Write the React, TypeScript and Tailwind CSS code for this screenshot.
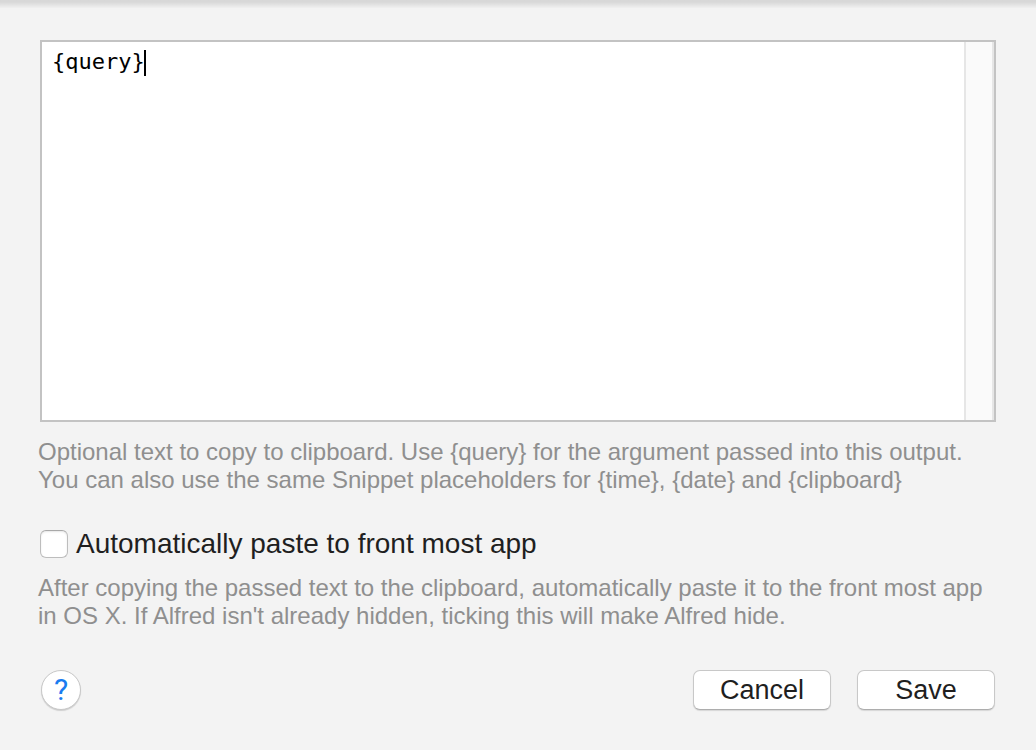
const hintClass = '-mx-0.5 text-[24px] leading-[28px] text-[#8f8f8f]'

const buttonClass =
  'h-10 w-[138px] rounded-[7px] border border-[#c8c8c8] border-b-[#adadad] bg-white text-[27px] leading-[36px] text-[#1f1f1f] shadow-[0_1px_1px_rgba(0,0,0,0.12)]'

export default function App() {
  return (
    <form
      className="flex min-h-dvh flex-col bg-[#f3f3f3] font-['Liberation_Sans',Arial,sans-serif]"
      onSubmit={(e) => e.preventDefault()}
    >
      {/* Shadow cast by the title bar of the parent window */}
      <div className="h-2 bg-gradient-to-b from-[#d8d8d8] from-25% to-[#f0f0f0]" />

      <div className="flex flex-1 flex-col px-10 pt-8">
        {/* Text box with its empty scroller track */}
        <div className="relative flex h-[382px] border-2 border-[#c3c3c3] bg-white">
          <textarea
            aria-label="Text to copy"
            aria-describedby="text-hint"
            spellCheck={false}
            defaultValue="{query}"
            className="peer min-w-0 flex-1 resize-none px-2.5 py-1.5 font-['DejaVu_Sans_Mono',monospace] text-[22px] leading-[28px] text-black outline-none"
          />
          {/* Resting caret, replaced by the native one on focus */}
          <span
            aria-hidden="true"
            className="pointer-events-none absolute top-2 left-[102px] h-[26px] w-0.5 bg-black peer-focus:hidden"
          />
          <div className="w-[30px] border-r-2 border-l-2 border-[#e6e6e6] bg-[#fafafa]" />
        </div>

        <p id="text-hint" className={`mt-4 ${hintClass}`}>
          Optional text to copy to clipboard. Use {'{query}'} for the argument passed into this output.
          <br />
          You can also use the same Snippet placeholders for {'{time}'}, {'{date}'} and {'{clipboard}'}
        </p>

        <label className="mt-9 flex items-center gap-2 text-[28px] leading-[28px] text-[#1f1f1f]">
          <input
            type="checkbox"
            aria-describedby="paste-hint"
            className="size-7 appearance-none rounded-md border border-[#bdbdbd] border-t-[#a8a8a8] bg-white shadow-[inset_0_1px_2px_rgba(0,0,0,0.1)] checked:bg-[#1a7cf0]"
          />
          Automatically paste to front most app
        </label>

        <p id="paste-hint" className={`mt-4 ${hintClass}`}>
          After copying the passed text to the clipboard, automatically paste it to the front most app
          <br />
          in OS X. If Alfred isn't already hidden, ticking this will make Alfred hide.
        </p>

        <div className="mx-px mt-10 flex items-center gap-[26px]">
          <button
            type="button"
            aria-label="Help"
            className="mr-auto size-10 rounded-full border border-[#c8c8c8] bg-white font-['Roboto',sans-serif] text-[30px] leading-[36px] text-[#1a7cf0] shadow-[0_1px_1px_rgba(0,0,0,0.15)]"
          >
            ?
          </button>
          <button type="button" className={buttonClass}>
            Cancel
          </button>
          <button type="submit" className={buttonClass}>
            Save
          </button>
        </div>
      </div>
    </form>
  )
}
